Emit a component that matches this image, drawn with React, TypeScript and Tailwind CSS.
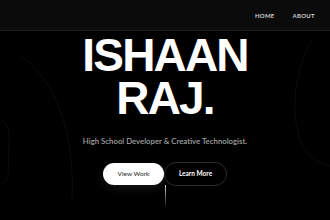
import React from 'react';

const navItems = ['HOME', 'ABOUT', 'WORK', 'CONTACT'];

function BackgroundLines() {
  return (
    <svg className="pointer-events-none absolute inset-0 h-full w-full" viewBox="0 0 330 220" fill="none">
      <path d="M20 55 C 55 80, 75 130, 72 200" stroke="#0d0d0d" strokeWidth="1" />
      <path d="M2 120 Q 10 125, 9 140 L 8 175 Q 7 182, 0 184" stroke="#0b0b0b" strokeWidth="1" />
      <path d="M312 40 C 295 70, 290 110, 300 140 C 306 155, 315 162, 330 166" stroke="#0c0c0c" strokeWidth="1" />
    </svg>
  );
}

export default function App() {
  return (
    <div className="relative h-[220px] w-[330px] overflow-hidden bg-black" style={{ fontFamily: '"Liberation Sans", Arial, sans-serif' }}>
      <BackgroundLines />

      {/* Header */}
      <header className="relative z-10 flex h-[31px] items-center overflow-hidden whitespace-nowrap border-b border-[#1c1c1c] bg-[#0b0b0b] pl-[255px]">
        <nav className="flex gap-[18px] font-['Lato',sans-serif] text-[6px] font-bold tracking-[0.04em] text-[#cfcfcf]">
          {navItems.map((item) => (
            <span key={item}>{item}</span>
          ))}
        </nav>
      </header>

      {/* Hero */}
      <main className="relative z-10 flex flex-col items-center pt-[3px]">
        <h1 className="flex flex-col items-center text-[46px] font-bold leading-[43px] tracking-[-0.04em] text-white">
          <span>ISHAAN</span>
          <span>RAJ.</span>
        </h1>

        <p className="mt-[16px] font-['Lato',sans-serif] text-[7.8px] font-semibold text-[#a0a0a0]">
          High School Developer &amp; Creative Technologist.
        </p>

        <div className="mt-[14px] flex items-center">
          <button className="h-[22px] w-[61px] rounded-full bg-white font-['Lato',sans-serif] text-[6.5px] font-semibold text-[#444] shadow-[0_4px_8px_rgba(255,255,255,0.08)]">
            View Work
          </button>
          <button className="h-[24px] w-[63px] rounded-full border border-[#2a2a2a] bg-black font-['Lato',sans-serif] text-[6.5px] font-bold text-white">
            Learn More
          </button>
        </div>

        <div className="-mt-[1px] ml-[1px] h-[24px] w-px bg-gradient-to-b from-[#d0d0d0] to-transparent" />
      </main>
    </div>
  );
}
